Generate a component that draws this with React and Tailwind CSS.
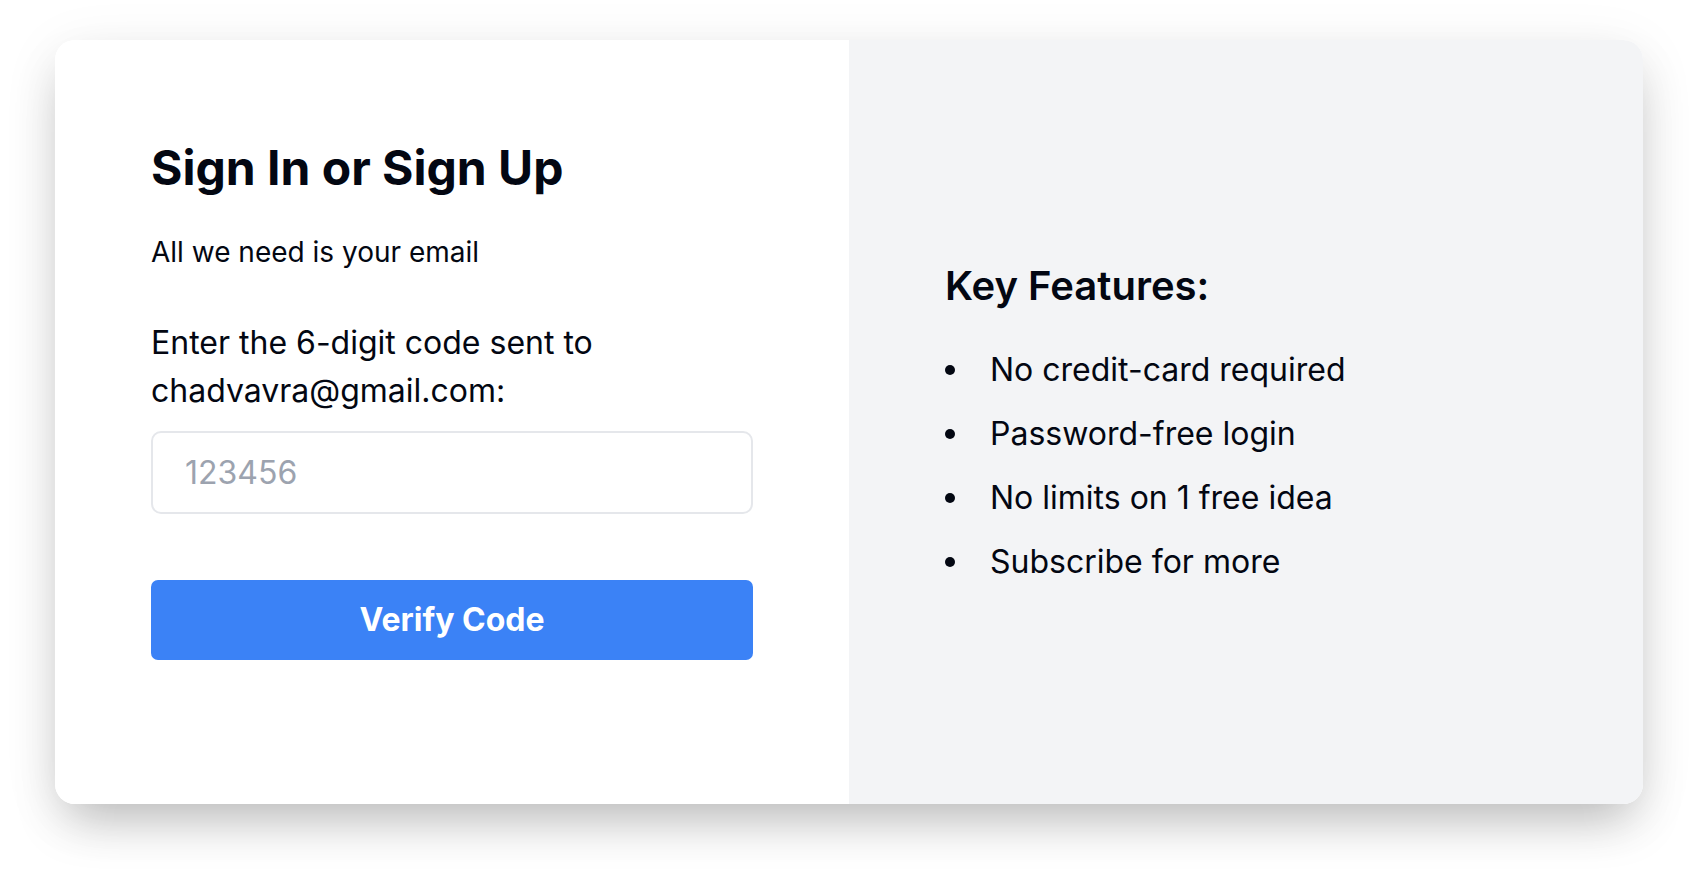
import React, { useState } from "react";

const features = [
  "No credit-card required",
  "Password-free login",
  "No limits on 1 free idea",
  "Subscribe for more"
];

export default function App() {
  const [code, setCode] = useState("");

  return (
    <div className="min-h-screen bg-white pt-[40px] pl-[55px] font-['Inter',sans-serif] text-[#030712]">
      <div className="flex w-[1588px] h-[764px] rounded-[20px] overflow-hidden shadow-[0_25px_50px_-12px_rgba(0,0,0,0.25),0_10px_60px_rgba(0,0,0,0.07)]">
        {/* Form side */}
        <div className="w-1/2 bg-white px-[96px] pt-[98px]">
          <h1 className="text-[48px] leading-[60px] font-bold">Sign In or Sign Up</h1>
          <p className="mt-[34px] text-[28px] leading-[40px]">All we need is your email</p>
          <p className="mt-[47px] text-[32px] leading-[48px]">
            Enter the 6-digit code sent to chadvavra@gmail.com:
          </p>
          <input
            type="text"
            value={code}
            onChange={(e) => setCode(e.target.value)}
            placeholder="123456"
            className="mt-[16px] w-full h-[83px] rounded-[10px] border-2 border-[#e5e7eb] px-[32px] text-[32px] placeholder:text-[#9ca3af] outline-none"
          />
          <button className="mt-[66px] w-full h-[80px] rounded-[7px] bg-[#3b82f6] text-white text-[32px] font-bold">
            Verify Code
          </button>
        </div>

        {/* Features side */}
        <div className="w-1/2 bg-[#f3f4f6] flex flex-col justify-center px-[96px] pt-[4px]">
          <h2 className="text-[40px] leading-[48px] font-semibold">Key Features:</h2>
          <ul className="mt-[36px] flex flex-col gap-[16px]">
            {features.map((f) => (
              <li key={f} className="flex items-center text-[32px] leading-[48px]">
                <span className="w-[10px] h-[10px] rounded-full bg-[#030712] mr-[35px]" />
                {f}
              </li>
            ))}
          </ul>
        </div>
      </div>
    </div>
  );
}
